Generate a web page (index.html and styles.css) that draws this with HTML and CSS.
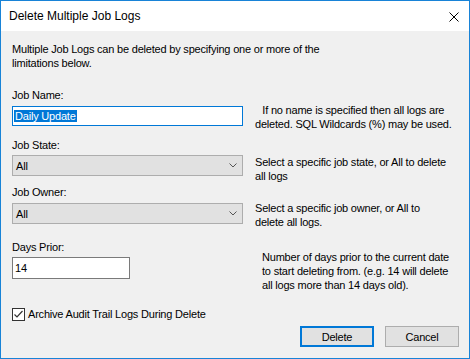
FILE: index.html
```html
<!DOCTYPE html>
<html lang="en">
<head>
    <meta charset="UTF-8">
    <title>Delete Multiple Job Logs</title>
    <link rel="stylesheet" href="styles.css">
</head>
<body>
    <div class="window">
        <div class="titlebar">
            <span class="title">Delete Multiple Job Logs</span>
            <svg class="close" width="10" height="10" viewBox="0 0 10 10">
                <path d="M0.5 0.5 L9.5 9.5 M9.5 0.5 L0.5 9.5" stroke="#000" stroke-width="1" fill="none"/>
            </svg>
        </div>

        <div class="content">
            <p class="intro">Multiple Job Logs can be deleted by specifying one or more of the<br>limitations below.</p>

            <div class="field name-field">
                <div class="field-main">
                    <div class="label">Job Name:</div>
                    <div class="textbox focused"><span class="selected">Daily Update</span></div>
                </div>
                <div class="help help-center">If no name is specified then all logs are<br>deleted. SQL Wildcards (%) may be used.</div>
            </div>

            <div class="field state-field">
                <div class="field-main">
                    <div class="label">Job State:</div>
                    <div class="combo">
                        <span>All</span>
                        <svg width="8" height="5" viewBox="0 0 8 5"><path d="M0.5 0.5 L4 4 L7.5 0.5" stroke="#555" fill="none"/></svg>
                    </div>
                </div>
                <div class="help">Select a specific job state, or All to delete<br>all logs</div>
            </div>

            <div class="field owner-field">
                <div class="field-main">
                    <div class="label">Job Owner:</div>
                    <div class="combo">
                        <span>All</span>
                        <svg width="8" height="5" viewBox="0 0 8 5"><path d="M0.5 0.5 L4 4 L7.5 0.5" stroke="#555" fill="none"/></svg>
                    </div>
                </div>
                <div class="help">Select a specific job owner, or All to<br>delete all logs.</div>
            </div>

            <div class="field days-field">
                <div class="field-main">
                    <div class="label">Days Prior:</div>
                    <div class="textbox days">14</div>
                </div>
                <div class="help">Number of days prior to the current date<br>to start deleting from. (e.g. 14 will delete<br>all logs more than 14 days old).</div>
            </div>

            <label class="check">
                <span class="box">
                    <svg width="11" height="11" viewBox="0 0 11 11"><path d="M1.5 5.5 L4 8 L9.5 2" stroke="#333" stroke-width="1.2" fill="none"/></svg>
                </span>
                Archive Audit Trail Logs During Delete
            </label>

            <div class="buttons">
                <button class="default">Delete</button>
                <button>Cancel</button>
            </div>
        </div>
    </div>
</body>
</html>
```

FILE: styles.css
```css
body {
    margin: 0;
    font-family: "Liberation Sans", Arial, sans-serif;
    font-size: 11px;
    letter-spacing: -0.2px;
    color: #000;
    background: #f0f0f0;
}
.window {
    width: 470px;
    height: 359px;
    box-sizing: border-box;
    border: 1px solid #1883d7;
    display: flex;
    flex-direction: column;
}
.titlebar {
    height: 30px;
    flex: none;
    background: white;
    display: flex;
    align-items: center;
    justify-content: space-between;
    padding: 0 10px 0 8px;
}
.title {
    font-size: 12px;
    letter-spacing: 0;
}
.close {
    margin-top: 1px;
}
.content {
    flex: 1;
    background: #f0f0f0;
    padding: 11px 10px 0 11px;
    line-height: 14px;
}
.intro {
    margin: 0;
    white-space: nowrap;
}
/* each field row keeps the height of its label + control;
   the help text next to it may hang lower */
.field {
    display: flex;
    align-items: flex-start;
}
.field-main {
    width: 231px;
    flex: none;
}
.help {
    white-space: nowrap;
}
.help-center {
    text-align: center;
}
.name-field {
    margin-top: 18px;
    height: 38px;
}
.name-field .help {
    padding: 15px 0 0 12px;
}
.state-field {
    margin-top: 12px;
    height: 38px;
}
.state-field .help {
    padding: 17px 0 0 12px;
}
.owner-field {
    margin-top: 9px;
    height: 39px;
}
.owner-field .help {
    padding: 16px 0 0 12px;
}
.days-field {
    margin-top: 16px;
    height: 39px;
}
.days-field .help {
    padding: 10px 0 0 19px;
}
.textbox {
    margin-top: 4px;
    height: 20px;
    box-sizing: border-box;
    background: white;
    border: 1px solid #7a7a7a;
    padding: 2px 1px;
    line-height: 14px;
}
.textbox.focused {
    border-color: #0078d7;
}
.selected {
    background: #0078d7;
    color: white;
    padding: 0 1px;
}
.textbox.days {
    margin-top: 3px;
    width: 118px;
    height: 22px;
    padding: 3px 2px;
}
.combo {
    margin-top: 3px;
    height: 21px;
    box-sizing: border-box;
    background: #e1e1e1;
    border: 1px solid #adadad;
    display: flex;
    align-items: center;
    justify-content: space-between;
    padding: 0 5px 0 3px;
}
.owner-field .combo {
    margin-top: 4px;
}
.check {
    margin-top: 28px;
    display: flex;
    align-items: center;
    gap: 3px;
}
.box {
    width: 13px;
    height: 13px;
    box-sizing: border-box;
    border: 1px solid #333;
    background: white;
    display: flex;
    align-items: center;
    justify-content: center;
}
.buttons {
    margin-top: 5px;
    display: flex;
    justify-content: flex-end;
    gap: 11px;
}
button {
    width: 74px;
    height: 21px;
    box-sizing: border-box;
    background: #e1e1e1;
    border: 1px solid #adadad;
    font-family: "Liberation Sans", Arial, sans-serif;
    font-size: 11px;
    letter-spacing: -0.2px;
    color: #000;
    padding: 0;
}
button.default {
    border: 2px solid #0078d7;
}
```
